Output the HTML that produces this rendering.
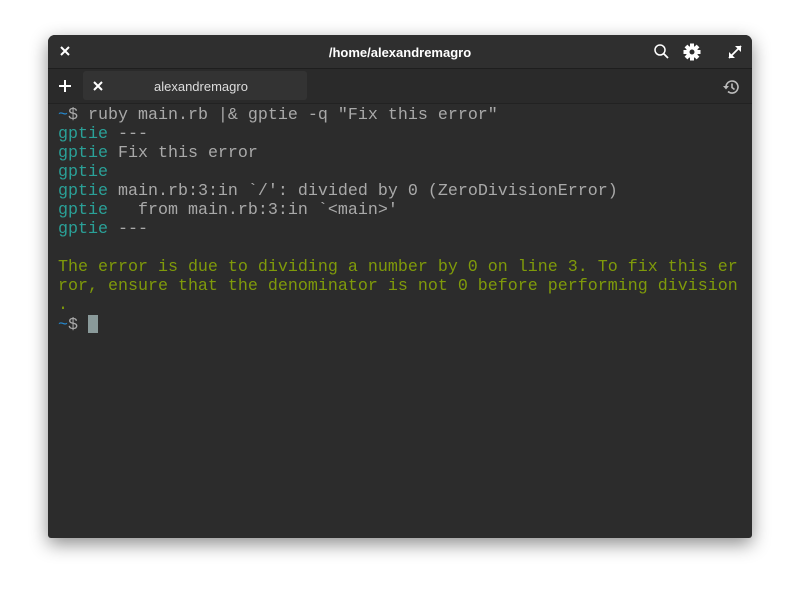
<!DOCTYPE html>
<html><head><meta charset="utf-8"><style>
body{margin:0;width:800px;height:600px;background:#fff;position:relative;overflow:hidden;font-family:"Liberation Sans",sans-serif}
.win{position:absolute;left:48px;top:35px;width:704px;height:503px;background:#2c2c2c;border-radius:7px 7px 3px 3px;box-shadow:0 6px 18px rgba(0,0,0,.45);overflow:hidden}
.hdr{position:absolute;left:0;top:0;width:704px;height:33px;background:#2f2f2f;border-bottom:1px solid #1e1e1e}
.title{position:absolute;left:0;right:0;top:9.5px;text-align:center;color:#fff;font-weight:bold;font-size:13px}
.tabs{position:absolute;left:0;top:34px;width:704px;height:34px;background:#2a2a2a;border-bottom:1px solid #222}
.tab{position:absolute;left:35px;top:2px;width:224px;height:29px;background:#333;border-radius:3px}
.tab span{position:absolute;left:71px;top:8px;color:#ddd;font-size:13px}
.term{position:absolute;left:10px;top:71px;font-family:"Liberation Mono",monospace;font-size:16.67px;line-height:19px;color:#a9a9a9;white-space:pre}
.t{color:#2aa198}.g{color:#7f9a0a}.b{color:#268bd2}
.cur{display:inline-block;width:10px;height:18px;background:#8a9a9a;vertical-align:-4px}
</style></head><body>
<div class="win">
<div class="hdr">
<svg style="position:absolute;left:12px;top:11px" width="10" height="10"><path d="M1 1L9 9M9 1L1 9" stroke="#fff" stroke-width="2"/></svg>
<div class="title">/home/alexandremagro</div>
<svg style="position:absolute;left:605px;top:8px" width="18" height="18"><circle cx="7" cy="7" r="5" fill="none" stroke="#fff" stroke-width="1.5"/><path d="M10.5 10.5L15 15" stroke="#fff" stroke-width="1.8"/></svg>
<svg style="position:absolute;left:634px;top:7px" width="20" height="20" viewBox="0 0 20 20"><g fill="#fff"><circle cx="10" cy="10" r="6"/><rect x="8" y="1.5" width="4" height="17"/><rect x="1.5" y="8" width="17" height="4"/><rect x="8" y="1.5" width="4" height="17" transform="rotate(45 10 10)"/><rect x="8" y="1.5" width="4" height="17" transform="rotate(-45 10 10)"/></g><circle cx="10" cy="10" r="2.5" fill="#2f2f2f"/></svg>
<svg style="position:absolute;left:679px;top:9px" width="16" height="16"><path d="M2 14L14 2" stroke="#fff" stroke-width="1.8"/><path d="M8 2H14V8ZM2 8V14H8Z" fill="#fff"/></svg>
</div>
<div class="tabs">
<svg style="position:absolute;left:11px;top:11px" width="12" height="12"><path d="M6 0V12M0 6H12" stroke="#fff" stroke-width="2"/></svg>
<div class="tab"><svg style="position:absolute;left:10px;top:10px" width="10" height="10"><path d="M1 1L9 9M9 1L1 9" stroke="#fff" stroke-width="2"/></svg><span>alexandremagro</span></div>
<svg style="position:absolute;left:674px;top:9px" width="18" height="18"><path d="M4 9A6 6 0 1 1 6 13.5" fill="none" stroke="#bbb" stroke-width="1.6"/><path d="M1 8L4 11.5L7 8Z" fill="#bbb"/><path d="M10 5.5V9.5L12.5 11.5" fill="none" stroke="#bbb" stroke-width="1.6"/></svg>
</div>
<div class="term"><span class="b">~</span>$ ruby main.rb |&amp; gptie -q "Fix this error"
<span class="t">gptie</span> ---
<span class="t">gptie</span> Fix this error
<span class="t">gptie</span>
<span class="t">gptie</span> main.rb:3:in `/': divided by 0 (ZeroDivisionError)
<span class="t">gptie</span>   from main.rb:3:in `&lt;main&gt;'
<span class="t">gptie</span> ---

<span class="g">The error is due to dividing a number by 0 on line 3. To fix this er
ror, ensure that the denominator is not 0 before performing division
.</span>
<span class="b">~</span>$ <span class="cur"></span></div>
</div>
</body></html>
